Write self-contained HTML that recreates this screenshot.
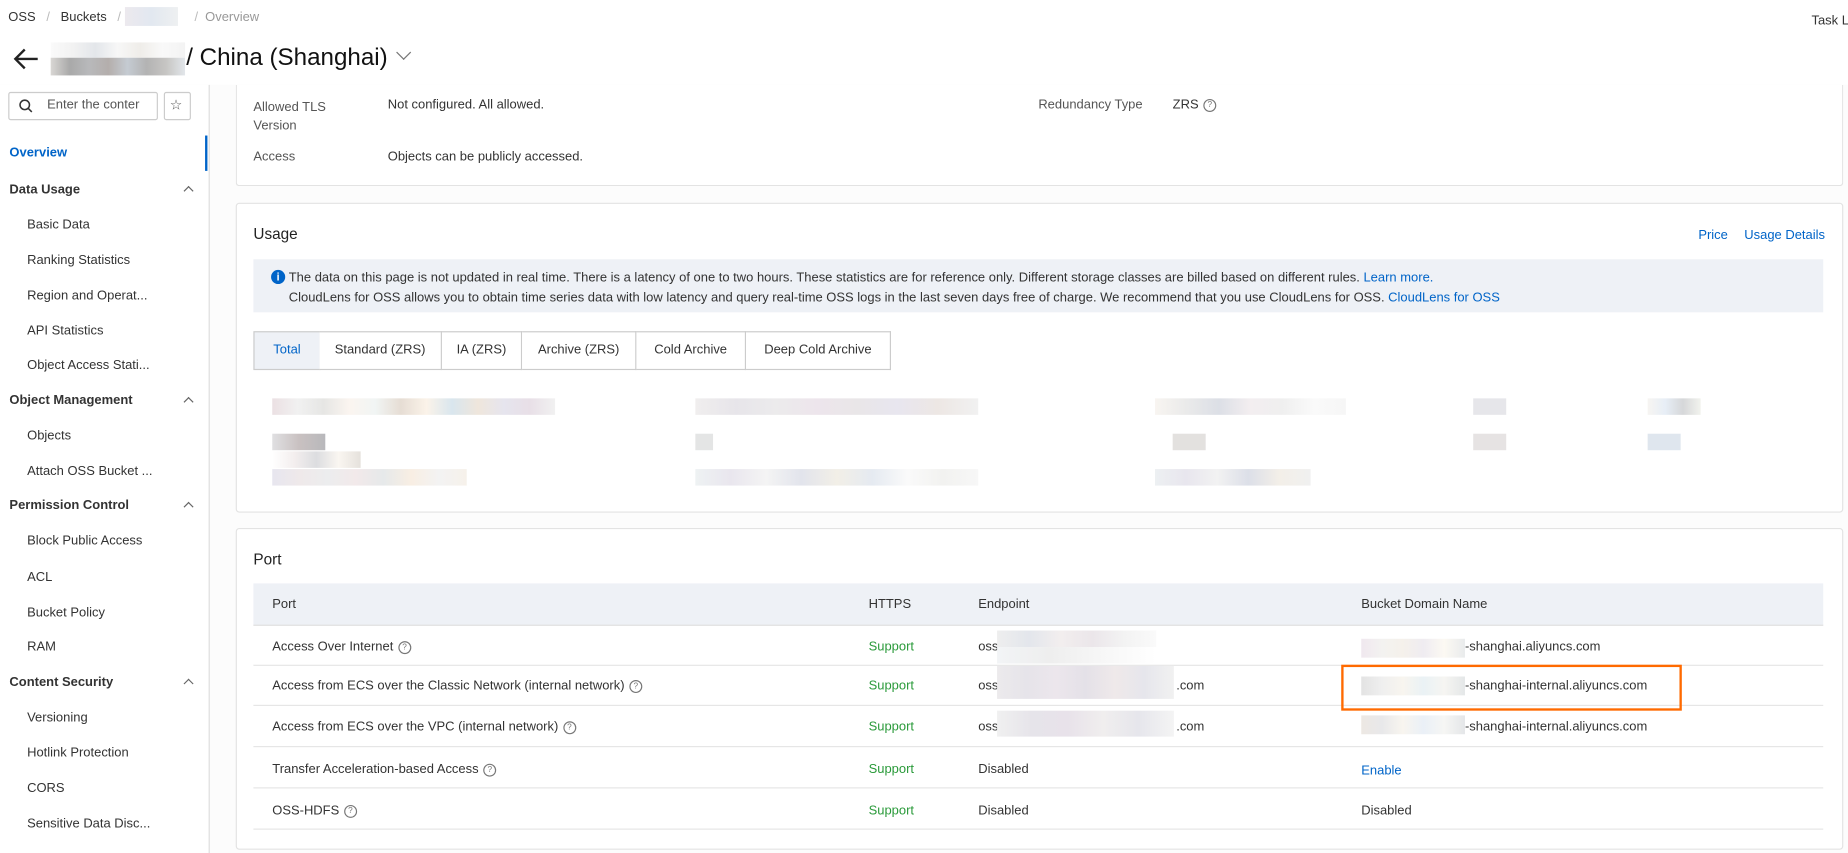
<!DOCTYPE html>
<html><head><meta charset="utf-8"><style>
html,body{margin:0;padding:0;width:1848px;height:853px;overflow:hidden;background:#fff;}
#w{position:absolute;left:0;top:0;width:1568px;height:724px;transform:scale(1.17857);transform-origin:0 0;font-family:"Liberation Sans",sans-serif;font-size:11px;color:#333;background:#fcfcfc;}
.a{position:absolute;white-space:nowrap;}
.card{position:absolute;background:#fff;border:1px solid #e3e3e3;border-radius:3px;}
.blue{color:#0064c8;}
.g{color:#2a9a3a;}
.q{display:inline-block;width:9px;height:9px;border:1px solid #777;border-radius:50%;font-size:7px;line-height:9px;text-align:center;color:#777;margin-left:4px;vertical-align:1px;}
.blk{position:absolute;}
.side{position:absolute;left:0;top:72px;width:177px;height:652px;background:#fff;border-right:1px solid #ddd;}
.grp{position:absolute;left:8px;font-weight:bold;color:#333;}
.it{position:absolute;left:23px;color:#333;}
.chev{position:absolute;left:157px;width:5px;height:5px;border-left:1px solid #666;border-top:1px solid #666;transform:rotate(45deg);}
.row{position:absolute;left:215px;width:1332px;border-bottom:1px solid #e6e6e6;}
.tab{position:absolute;top:281px;height:31px;line-height:31px;text-align:center;border:1px solid #ccc;border-left:none;background:#fff;}
</style></head><body><div id="w">
<div class="blk" style="left:0;top:0;width:1568px;height:72px;background:#fff"></div>
<div class="a" style="left:7px;top:9px;color:#333">OSS <span style="color:#bbb;margin:0 6px">/</span> Buckets <span style="color:#bbb;margin:0 6px">/</span></div>
<div class="blk" style="left:106px;top:6px;width:45px;height:16px;background:linear-gradient(90deg,#ece9ee,#e2e8f0,#eef0f1)"></div>
<div class="a" style="left:165px;top:9px;color:#999"><span style="color:#bbb;margin-right:6px">/</span>Overview</div>
<div class="a" style="left:1537px;top:12px;color:#333">Task Li</div>
<svg class="a" style="left:10px;top:40px" width="24" height="20" viewBox="0 0 24 20"><path d="M22 10H3M11 2L3 10l8 8" fill="none" stroke="#222" stroke-width="2"/></svg>
<div class="blk" style="left:43px;top:36px;width:114px;height:13px;background:linear-gradient(90deg,#fafafa,#f2f2f2,#e3e6ea,#f7f7f7,#efede9,#f9f9f9,#f3f3f3)"></div>
<div class="blk" style="left:43px;top:49px;width:114px;height:15px;background:linear-gradient(90deg,#d9d7d4,#a9a9a9,#b8b9bb,#b4aeac,#c5cbd2,#b3b3b3,#c6c5c3,#e2e6ea)"></div>
<div class="a" style="left:158px;top:37px;font-size:20.5px;color:#111">/ China (Shanghai)</div>
<div class="a" style="left:338px;top:40px;width:8px;height:8px;border-right:1.5px solid #777;border-bottom:1.5px solid #777;transform:rotate(45deg)"></div>

<div class="side">
<div class="blk" style="left:7px;top:6px;width:125px;height:22px;border:1px solid #ccc;border-radius:2px"></div>
<svg class="a" style="left:16px;top:12px" width="12" height="12" viewBox="0 0 12 12"><circle cx="5" cy="5" r="4" fill="none" stroke="#333" stroke-width="1.3"/><path d="M8 8l3 3" stroke="#333" stroke-width="1.3"/></svg>
<div class="a" style="left:40px;top:11px;color:#555">Enter the conter</div>
<div class="blk" style="left:139px;top:6px;width:21px;height:22px;border:1px solid #ccc;border-radius:2px"></div>
<div class="a" style="left:144px;top:10px;font-size:12px;color:#555">☆</div>
<div class="blk" style="left:174px;top:43px;width:2px;height:30px;background:#0064c8"></div>
<div class="grp" style="top:52px;color:#0064c8">Overview</div>
<div class="grp" style="top:83px">Data Usage</div><div class="chev" style="top:87px"></div>
<div class="it" style="top:113px">Basic Data</div>
<div class="it" style="top:143px">Ranking Statistics</div>
<div class="it" style="top:173px">Region and Operat...</div>
<div class="it" style="top:203px">API Statistics</div>
<div class="it" style="top:232px">Object Access Stati...</div>
<div class="grp" style="top:262px">Object Management</div><div class="chev" style="top:266px"></div>
<div class="it" style="top:292px">Objects</div>
<div class="it" style="top:322px">Attach OSS Bucket ...</div>
<div class="grp" style="top:351px">Permission Control</div><div class="chev" style="top:355px"></div>
<div class="it" style="top:381px">Block Public Access</div>
<div class="it" style="top:412px">ACL</div>
<div class="it" style="top:442px">Bucket Policy</div>
<div class="it" style="top:471px">RAM</div>
<div class="grp" style="top:501px">Content Security</div><div class="chev" style="top:505px"></div>
<div class="it" style="top:531px">Versioning</div>
<div class="it" style="top:561px">Hotlink Protection</div>
<div class="it" style="top:591px">CORS</div>
<div class="it" style="top:621px">Sensitive Data Disc...</div>
</div>

<div class="card" style="left:200px;top:72px;width:1362px;height:85px;border-top:none;border-radius:0 0 3px 3px"></div>
<div class="a" style="left:215px;top:83px;color:#555;line-height:16px">Allowed TLS<br>Version</div>
<div class="a" style="left:329px;top:83px">Not configured. All allowed.</div>
<div class="a" style="left:215px;top:127px;color:#555">Access</div>
<div class="a" style="left:329px;top:127px">Objects can be publicly accessed.</div>
<div class="a" style="left:881px;top:83px;color:#555">Redundancy Type</div>
<div class="a" style="left:995px;top:83px">ZRS<span class="q">?</span></div>

<div class="card" style="left:200px;top:172px;width:1362px;height:261px"></div>
<div class="a" style="left:215px;top:191px;font-size:13px;color:#222">Usage</div>
<div class="a blue" style="left:1441px;top:194px">Price</div>
<div class="a blue" style="left:1480px;top:194px">Usage Details</div>
<div class="blk" style="left:215px;top:220px;width:1332px;height:45px;background:#eef1f6"></div>
<div class="a" style="left:230px;top:229px;width:12px;height:12px;border-radius:50%;background:#0064c8;color:#fff;font-size:9px;font-weight:bold;text-align:center;line-height:12px">i</div>
<div class="a" style="left:245px;top:230px">The data on this page is not updated in real time. There is a latency of one to two hours. These statistics are for reference only. Different storage classes are billed based on different rules. <span class="blue">Learn more.</span></div>
<div class="a" style="left:245px;top:247px">CloudLens for OSS allows you to obtain time series data with low latency and query real-time OSS logs in the last seven days free of charge. We recommend that you use CloudLens for OSS. <span class="blue">CloudLens for OSS</span></div>
<div class="tab" style="left:215px;width:55px;border-left:1px solid #ccc;background:#eef1f6;color:#0064c8">Total</div>
<div class="tab" style="left:271px;width:103px">Standard (ZRS)</div>
<div class="tab" style="left:375px;width:67px">IA (ZRS)</div>
<div class="tab" style="left:443px;width:96px">Archive (ZRS)</div>
<div class="tab" style="left:540px;width:92px">Cold Archive</div>
<div class="tab" style="left:633px;width:122px">Deep Cold Archive</div>
<div class="blk" style="left:231px;top:338px;width:240px;height:14px;background:linear-gradient(90deg,#ebe0e3,#f1f1f1,#e6e6e4,#fbf5f0,#f1f5f4,#e6ddd4,#fbf3e9,#d9e6ee,#efe6dc,#e6e5ee,#e8dfe7,#f1f1f1)"></div>
<div class="blk" style="left:231px;top:368px;width:45px;height:14px;background:linear-gradient(90deg,#e0e0e2,#c9c1c1,#b8b8bb)"></div>
<div class="blk" style="left:231px;top:383px;width:75px;height:14px;background:linear-gradient(90deg,#fff,#f3eeee,#dcdde0,#faf6f1,#e5e1dc)"></div>
<div class="blk" style="left:231px;top:398px;width:165px;height:14px;background:linear-gradient(90deg,#e7e6ef,#efe9ea,#ecedee,#f2e9ea,#e6e9ea,#f8eee3,#f3f3f3,#f6f1ea)"></div>
<div class="blk" style="left:590px;top:338px;width:240px;height:14px;background:linear-gradient(90deg,#f0eeee,#e7e5ea,#ecebec,#ede5ec,#e9e6e8,#e8e6ef,#ede7e4,#f1f1f1)"></div>
<div class="blk" style="left:590px;top:368px;width:15px;height:14px;background:#e4e5e5"></div>
<div class="blk" style="left:590px;top:398px;width:240px;height:14px;background:linear-gradient(90deg,#eef2f3,#e9e6ee,#f4f4f4,#e2e4ec,#f2efe7,#e5eaf1,#fafafa,#f2f2f0,#f7f7f7)"></div>
<div class="blk" style="left:980px;top:338px;width:162px;height:14px;background:linear-gradient(90deg,#f8f5f1,#eaeaea,#dcdfe6,#f3eef0,#efefef,#fafafa,#f6f6f6)"></div>
<div class="blk" style="left:995px;top:368px;width:28px;height:14px;background:#e3e1df"></div>
<div class="blk" style="left:980px;top:398px;width:132px;height:14px;background:linear-gradient(90deg,#edf0f2,#e8e6ee,#f2f2f2,#dcdfe8,#f3efe8,#f0f0f0)"></div>
<div class="blk" style="left:1250px;top:338px;width:28px;height:14px;background:#e6e6ea"></div>
<div class="blk" style="left:1250px;top:368px;width:28px;height:14px;background:#e6e3e3"></div>
<div class="blk" style="left:1398px;top:338px;width:45px;height:14px;background:linear-gradient(90deg,#f7f5f2,#e7eef6,#d6d7d9,#f2f3ee)"></div>
<div class="blk" style="left:1398px;top:368px;width:28px;height:14px;background:#dfe6ee"></div>

<div class="card" style="left:200px;top:448px;width:1362px;height:271px"></div>
<div class="a" style="left:215px;top:467px;font-size:13px;color:#222">Port</div>
<div class="blk" style="left:215px;top:495px;width:1332px;height:35px;background:#eef1f6;border-bottom:1px solid #e0e0e0"></div>
<div class="a" style="left:231px;top:507px">Port</div>
<div class="a" style="left:737px;top:507px">HTTPS</div>
<div class="a" style="left:830px;top:507px">Endpoint</div>
<div class="a" style="left:1155px;top:507px">Bucket Domain Name</div>
<div class="row" style="top:530px;height:34px"></div>
<div class="row" style="top:565px;height:33px"></div>
<div class="row" style="top:599px;height:34px"></div>
<div class="row" style="top:634px;height:34px"></div>
<div class="row" style="top:669px;height:34px"></div>
<div class="a" style="left:231px;top:543px">Access Over Internet<span class="q">?</span></div>
<div class="a" style="left:231px;top:576px">Access from ECS over the Classic Network (internal network)<span class="q">?</span></div>
<div class="a" style="left:231px;top:611px">Access from ECS over the VPC (internal network)<span class="q">?</span></div>
<div class="a" style="left:231px;top:647px">Transfer Acceleration-based Access<span class="q">?</span></div>
<div class="a" style="left:231px;top:682px">OSS-HDFS<span class="q">?</span></div>
<div class="a g" style="left:737px;top:543px">Support</div>
<div class="a g" style="left:737px;top:576px">Support</div>
<div class="a g" style="left:737px;top:611px">Support</div>
<div class="a g" style="left:737px;top:647px">Support</div>
<div class="a g" style="left:737px;top:682px">Support</div>
<div class="a" style="left:830px;top:543px">oss</div>
<div class="blk" style="left:846px;top:535px;width:135px;height:14px;background:linear-gradient(90deg,#eee,#e3e6ec,#f2eeee,#ebe6ea,#f3f3f3,#fafafa)"></div>
<div class="blk" style="left:846px;top:549px;width:135px;height:14px;background:linear-gradient(90deg,#f2f4f6,#eee,#f7f7f7,#fff)"></div>
<div class="a" style="left:830px;top:576px">oss</div>
<div class="blk" style="left:846px;top:565px;width:150px;height:28px;background:linear-gradient(90deg,#eceaec,#e6e4ea,#ece6ec,#e4e1e8,#efe9ea,#e6e6ec,#f1f1f1)"></div>
<div class="a" style="left:998px;top:576px">.com</div>
<div class="a" style="left:830px;top:611px">oss</div>
<div class="blk" style="left:846px;top:603px;width:150px;height:22px;background:linear-gradient(90deg,#f0f0f0,#e6e4ea,#e8e2ea,#f0eeee,#e6e6ec,#f4f4f4)"></div>
<div class="a" style="left:998px;top:611px">.com</div>
<div class="a" style="left:830px;top:647px">Disabled</div>
<div class="a" style="left:830px;top:682px">Disabled</div>
<div class="blk" style="left:1155px;top:542px;width:88px;height:16px;background:linear-gradient(90deg,#f0e8ef,#f3f2f0,#f5f1eb,#efecf1,#fcf9f3,#e9ebec)"></div>
<div class="a" style="left:1243px;top:543px">-shanghai.aliyuncs.com</div>
<div class="blk" style="left:1155px;top:574px;width:88px;height:16px;background:linear-gradient(90deg,#e3e3e3,#efefef,#f8f5ef,#eaf2f5,#f6f5f2,#e4e7e8)"></div>
<div class="a" style="left:1243px;top:576px">-shanghai-internal.aliyuncs.com</div>
<div class="blk" style="left:1155px;top:607px;width:88px;height:16px;background:linear-gradient(90deg,#ede8e3,#e8e8ea,#f8f5ef,#eaf0f7,#f6f6f4,#e4e6e8)"></div>
<div class="a" style="left:1243px;top:611px">-shanghai-internal.aliyuncs.com</div>
<div class="a blue" style="left:1155px;top:648px">Enable</div>
<div class="a" style="left:1155px;top:682px">Disabled</div>
<div class="blk" style="left:1138px;top:564px;width:285px;height:35px;border:2px solid #ff6a00"></div>
</div></body></html>
